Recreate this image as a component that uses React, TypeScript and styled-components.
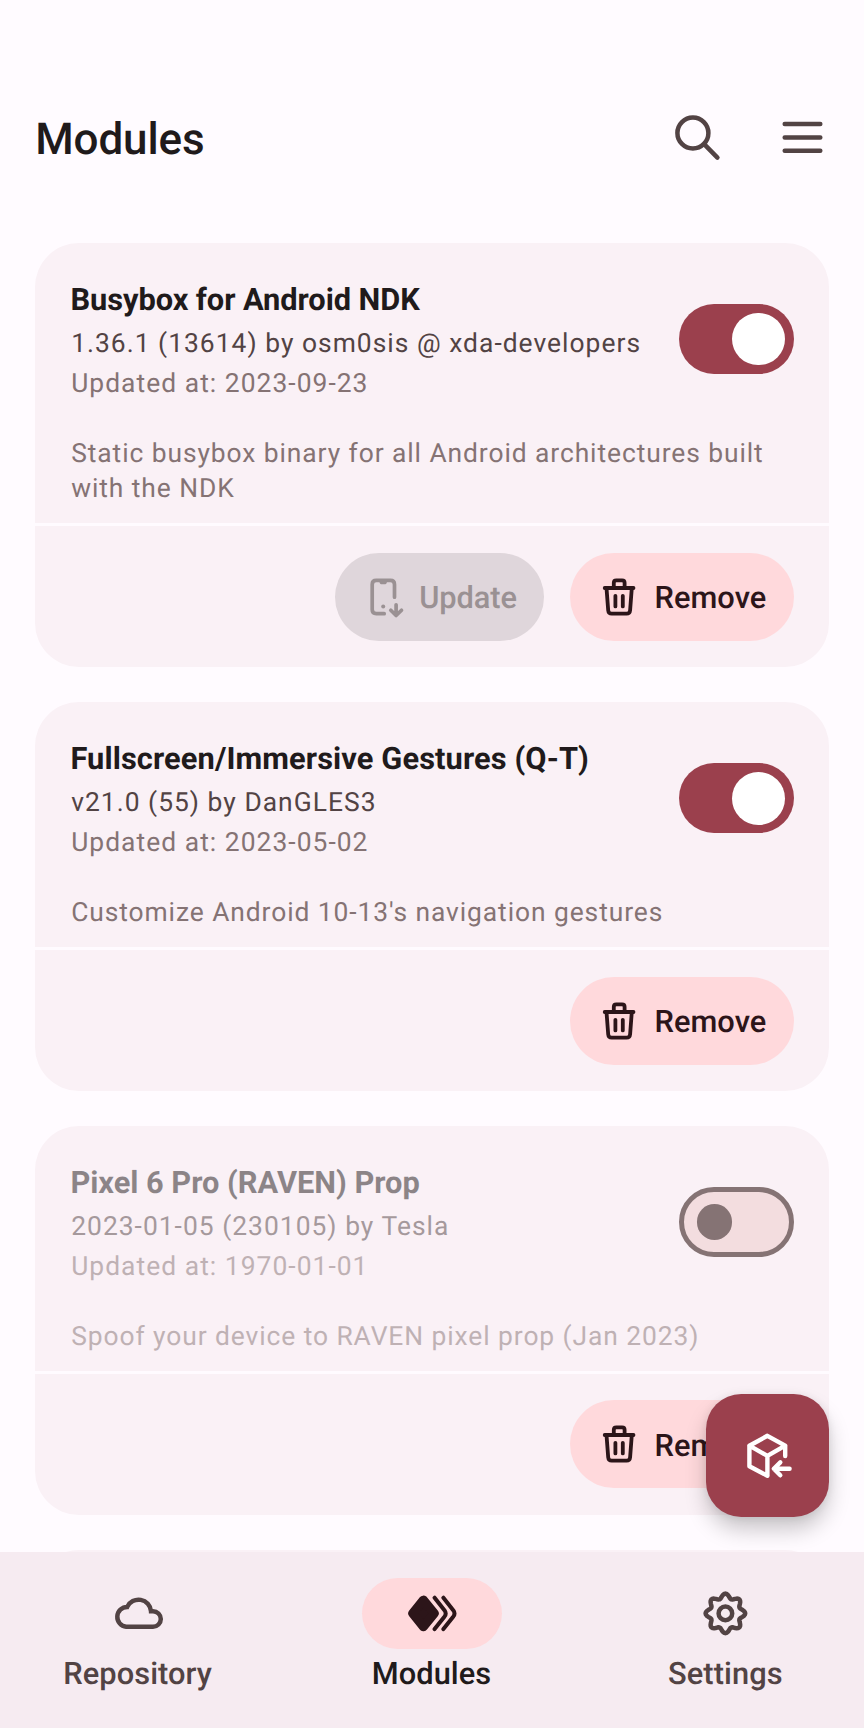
import React from "react";
import styled, { createGlobalStyle } from "styled-components";

const color = {
  background: "#fffbff",
  card: "#faf1f6",
  nav: "#f6ebf1",
  primary: "#9b404d",
  onPrimary: "#ffffff",
  container: "#ffd9dc",
  onContainer: "#2c1519",
  text: "#201a1b",
  textVariant: "#524344",
  outline: "#857374",
  track: "#f3dddf",
};

const GlobalStyle = createGlobalStyle`
  * { box-sizing: border-box; }
  body { margin: 0; background: ${color.background}; text-rendering: geometricPrecision; }
  button { font: inherit; border: 0; padding: 0; background: none; color: inherit; text-rendering: inherit; }
  svg { display: block; flex: none; fill: none; stroke: currentColor; stroke-linecap: round; stroke-linejoin: round; }
`;

const Screen = styled.div`
  position: relative;
  display: flex;
  flex-direction: column;
  width: 864px;
  height: 1728px;
  overflow: hidden;
  background: ${color.background};
  color: ${color.text};
  font-family: Roboto, "Liberation Sans", sans-serif;
`;

const TopBar = styled.header`
  display: flex;
  flex: none;
  align-items: center;
  height: 207px;
  padding: 67px 8.4px 0 35.2px;
  color: ${color.textVariant};
`;

const PageTitle = styled.h1`
  flex: 1;
  margin: 0;
  color: ${color.text};
  font-size: 44px;
  font-weight: 500;
  letter-spacing: -0.1px;
  line-height: 62px;
  padding-top: 4px;
`;

const IconButton = styled.button`
  display: grid;
  place-items: center;
  width: 105.6px;
  height: 105.6px;
`;

const ModuleList = styled.main`
  display: flex;
  flex: 1;
  flex-direction: column;
  gap: 35.2px;
  min-height: 0;
  overflow: hidden;
  padding: 35.8px 35.2px 0;
`;

const Card = styled.article`
  flex: none;
  border-radius: 44px;
  background: ${color.card};
`;

const CardHead = styled.div`
  display: flex;
  align-items: center;
  justify-content: space-between;
  height: 194.2px;
  padding: 35.2px 35.2px 37px 36px;
`;

const Details = styled.div<{ $dim?: boolean }>`
  display: flex;
  flex-direction: column;
  gap: 4.6px;
  padding-top: 2px;
  white-space: nowrap;
  opacity: ${(p) => (p.$dim ? 0.5 : 1)};
`;

const ModuleName = styled.h2<{ $tracking: number }>`
  margin: 0 0 0 -0.8px;
  font-size: 30.8px;
  font-weight: 700;
  letter-spacing: ${(p) => p.$tracking}px;
  line-height: 44px;
`;

const Meta = styled.p<{ $soft?: boolean }>`
  margin: 0;
  color: ${(p) => (p.$soft ? color.outline : color.textVariant)};
  font-size: 26.4px;
  letter-spacing: ${(p) => (p.$soft ? 1.04 : 1.02)}px;
  line-height: 35.2px;
`;

const Description = styled.p<{ $dim?: boolean }>`
  margin: 0;
  padding: 0 35.2px 15.6px 36px;
  color: ${color.outline};
  font-size: 26.4px;
  letter-spacing: 0.92px;
  line-height: 35.2px;
  opacity: ${(p) => (p.$dim ? 0.5 : 1)};
`;

const Toggle = styled.span<{ $on: boolean }>`
  display: flex;
  flex: none;
  align-items: center;
  justify-content: ${(p) => (p.$on ? "flex-end" : "flex-start")};
  width: 114.4px;
  height: 70.4px;
  padding: ${(p) => (p.$on ? "0 8.8px" : "0 12.8px")};
  border: ${(p) => (p.$on ? "0" : `5px solid ${color.outline}`)};
  border-radius: 36px;
  background: ${(p) => (p.$on ? color.primary : color.track)};
`;

const Thumb = styled.span<{ $on: boolean }>`
  width: ${(p) => (p.$on ? 52.8 : 35.2)}px;
  height: ${(p) => (p.$on ? 52.8 : 35.2)}px;
  border-radius: 50%;
  background: ${(p) => (p.$on ? color.onPrimary : color.outline)};
`;

const Actions = styled.div`
  display: flex;
  justify-content: flex-end;
  gap: 26.4px;
  padding: 26.6px 35.2px 26.2px;
  border-top: 3.3px solid ${color.background};
`;

const ActionButton = styled.button<{ $disabled?: boolean }>`
  display: flex;
  align-items: center;
  gap: 13.8px;
  height: 88px;
  padding: 0 27.2px 0 26.2px;
  border-radius: 44px;
  background: ${(p) => (p.$disabled ? "rgba(32,26,27,0.12)" : color.container)};
  color: ${(p) => (p.$disabled ? "#9a9193" : color.onContainer)};
  font-size: 30.8px;
  font-weight: 500;
  letter-spacing: ${(p) => (p.$disabled ? -0.08 : 0.08)}px;
  line-height: 44px;
`;

const ActionLabel = styled.span`
  padding-top: 3px;
`;

const Fab = styled.button`
  position: absolute;
  right: 35.2px;
  bottom: 211.2px;
  display: grid;
  place-items: center;
  width: 123.2px;
  height: 123.2px;
  border-radius: 35.2px;
  background: ${color.primary};
  color: ${color.onPrimary};
  box-shadow: 0 13px 22px -1px rgba(0, 0, 0, 0.22), 0 1px 8px rgba(0, 0, 0, 0.08);
`;

const NavBar = styled.nav`
  display: flex;
  flex: none;
  gap: 17.6px;
  height: 176px;
  background: ${color.nav};
  position: relative;
`;

const NavItem = styled.button<{ $active?: boolean }>`
  display: flex;
  flex: 1;
  flex-direction: column;
  align-items: center;
  gap: 3px;
  padding-top: 26.4px;
  color: ${(p) => (p.$active ? color.text : color.textVariant)};
  font-size: 30.8px;
  font-weight: 500;
  letter-spacing: 0.08px;
  line-height: 44px;
`;

const NavLabel = styled.span`
  padding-right: 1px;
`;

const NavPill = styled.span<{ $active?: boolean }>`
  display: grid;
  place-items: center;
  width: 140.8px;
  height: 70.4px;
  border-radius: 36px;
  background: ${(p) => (p.$active ? color.container : "transparent")};
  color: ${(p) => (p.$active ? color.onContainer : color.textVariant)};
`;

type GlyphProps = { size?: number; weight?: number; children: React.ReactNode };

const Glyph = ({ size = 52.8, weight = 4.5, children }: GlyphProps) => (
  <svg width={size} height={size} viewBox={`${-size / 2} ${-size / 2} ${size} ${size}`} strokeWidth={weight}>
    {children}
  </svg>
);

const SearchIcon = () => (
  <Glyph>
    <circle cx="-4.5" cy="-4.4" r="15.5" />
    <path d="M7 7 20 20.2" />
  </Glyph>
);

const MenuIcon = () => (
  <Glyph>
    <path d="M-17.7-13.3h35.6M-17.7 0h35.6M-17.7 13.3h35.6" />
  </Glyph>
);

const TrashIcon = () => (
  <Glyph size={44} weight={3.8}>
    <path d="M-14.3-9H14.5" />
    <path d="M-5.2-9V-14.2Q-5.2-16.7-2.7-16.7H3.1Q5.6-16.7 5.6-14.2V-9" />
    <path d="M-12.5-9-10.8 13.3Q-10.5 16.6-7.3 16.6H7.6Q10.8 16.6 11.1 13.3L12.8-9" />
    <path d="M-3.6-1.2V9.4M3.8-1.2V9.4" />
  </Glyph>
);

const PhoneDownIcon = () => (
  <Glyph size={44} weight={3.7}>
    <path d="M1.2 16.7H-6.7Q-10.8 16.7-10.8 12.6V-12.6Q-10.8-16.7-6.7-16.7H7.4Q11.5-16.7 11.5-12.6V.2" />
    <path d="M-3.8-16.5Q-3.5-12.8-1.8-12.8H2.2Q3.9-12.8 4.2-16.5Z" fill="currentColor" stroke="none" />
    <circle cx="0.2" cy="9.4" r="2" fill="currentColor" stroke="none" />
    <path d="M13.1 7.8V18M7.8 13.2 13.1 18.5 18.5 13.2" />
  </Glyph>
);

const PackageIcon = () => (
  <Glyph weight={4.4}>
    <path d="M0 20.3-18 10.9V-9.7L0-19.6 17.8-9.7V.6M-18-9.7 0 .5 17.8-9.7M0 .5V20.3" />
    <path d="M6.6 13.4H22.2M12.9 7 6.4 13.4 12.9 19.9" />
  </Glyph>
);

const CloudIcon = () => (
  <Glyph>
    <path
      d="M-12.2 13.4A9.98 9.98 0 0 1-11.2-6.5 12.5 12.5 0 0 1 12.6-2.2H14.6A7.8 7.8 0 0 1 14.6 13.4Z"
      strokeLinejoin="miter"
    />
  </Glyph>
);

const LayersIcon = () => (
  <Glyph weight={4}>
    <path d="M-19.6 0-9 -13.2 1.8 0-9 13.2Z" fill="currentColor" strokeWidth="9.2" />
    <path d="M2.2-15.7 12.2-3Q14.4 0 12.2 3L2.2 15.7M11-15.7 21-3Q23.2 0 21 3L11 15.7" />
  </Glyph>
);

const GEAR = Array.from({ length: 96 }, (_, i) => {
  const a = (i / 96) * Math.PI * 2;
  const r = 17.5 + 2.3 * Math.cos(8 * a);
  return `${(r * Math.cos(a)).toFixed(2)} ${(r * Math.sin(a)).toFixed(2)}`;
}).join("L");

const GearIcon = () => (
  <Glyph>
    <path d={`M${GEAR}Z`} />
    <circle r="6.8" />
  </Glyph>
);

type Module = {
  name: string;
  tracking: number;
  version: string;
  updated: string;
  description: string;
  enabled: boolean;
  updatable?: boolean;
};

const modules: Module[] = [
  {
    name: "Busybox for Android NDK",
    tracking: -0.06,
    version: "1.36.1 (13614) by osm0sis @ xda-developers",
    updated: "2023-09-23",
    description: "Static busybox binary for all Android architectures built with the NDK",
    enabled: true,
    updatable: true,
  },
  {
    name: "Fullscreen/Immersive Gestures (Q-T)",
    tracking: 0.1,
    version: "v21.0 (55) by DanGLES3",
    updated: "2023-05-02",
    description: "Customize Android 10-13's navigation gestures",
    enabled: true,
  },
  {
    name: "Pixel 6 Pro (RAVEN) Prop",
    tracking: -0.02,
    version: "2023-01-05 (230105) by Tesla",
    updated: "1970-01-01",
    description: "Spoof your device to RAVEN pixel prop (Jan 2023)",
    enabled: false,
  },
];

const NextCard = styled(Card)`
  height: 388px;
`;

const ModuleCard = ({ module: m }: { module: Module }) => (
  <Card>
    <CardHead>
      <Details $dim={!m.enabled}>
        <ModuleName $tracking={m.tracking}>{m.name}</ModuleName>
        <Meta>{m.version}</Meta>
        <Meta $soft>Updated at: {m.updated}</Meta>
      </Details>
      <Toggle $on={m.enabled} role="switch" aria-checked={m.enabled}>
        <Thumb $on={m.enabled} />
      </Toggle>
    </CardHead>
    <Description $dim={!m.enabled}>{m.description}</Description>
    <Actions>
      {m.updatable && (
        <ActionButton $disabled>
          <PhoneDownIcon />
          <ActionLabel>Update</ActionLabel>
        </ActionButton>
      )}
      <ActionButton>
        <TrashIcon />
        <ActionLabel>Remove</ActionLabel>
      </ActionButton>
    </Actions>
  </Card>
);

export default function App() {
  return (
    <Screen>
      <GlobalStyle />
      <TopBar>
        <PageTitle>Modules</PageTitle>
        <IconButton aria-label="Search"><SearchIcon /></IconButton>
        <IconButton aria-label="Menu"><MenuIcon /></IconButton>
      </TopBar>
      <ModuleList>
        {modules.map((m) => (
          <ModuleCard key={m.name} module={m} />
        ))}
        <NextCard />
      </ModuleList>
      <Fab aria-label="Install from storage"><PackageIcon /></Fab>
      <NavBar>
        <NavItem>
          <NavPill><CloudIcon /></NavPill>
          <NavLabel>Repository</NavLabel>
        </NavItem>
        <NavItem $active>
          <NavPill $active><LayersIcon /></NavPill>
          <NavLabel>Modules</NavLabel>
        </NavItem>
        <NavItem>
          <NavPill><GearIcon /></NavPill>
          <NavLabel>Settings</NavLabel>
        </NavItem>
      </NavBar>
    </Screen>
  );
}
